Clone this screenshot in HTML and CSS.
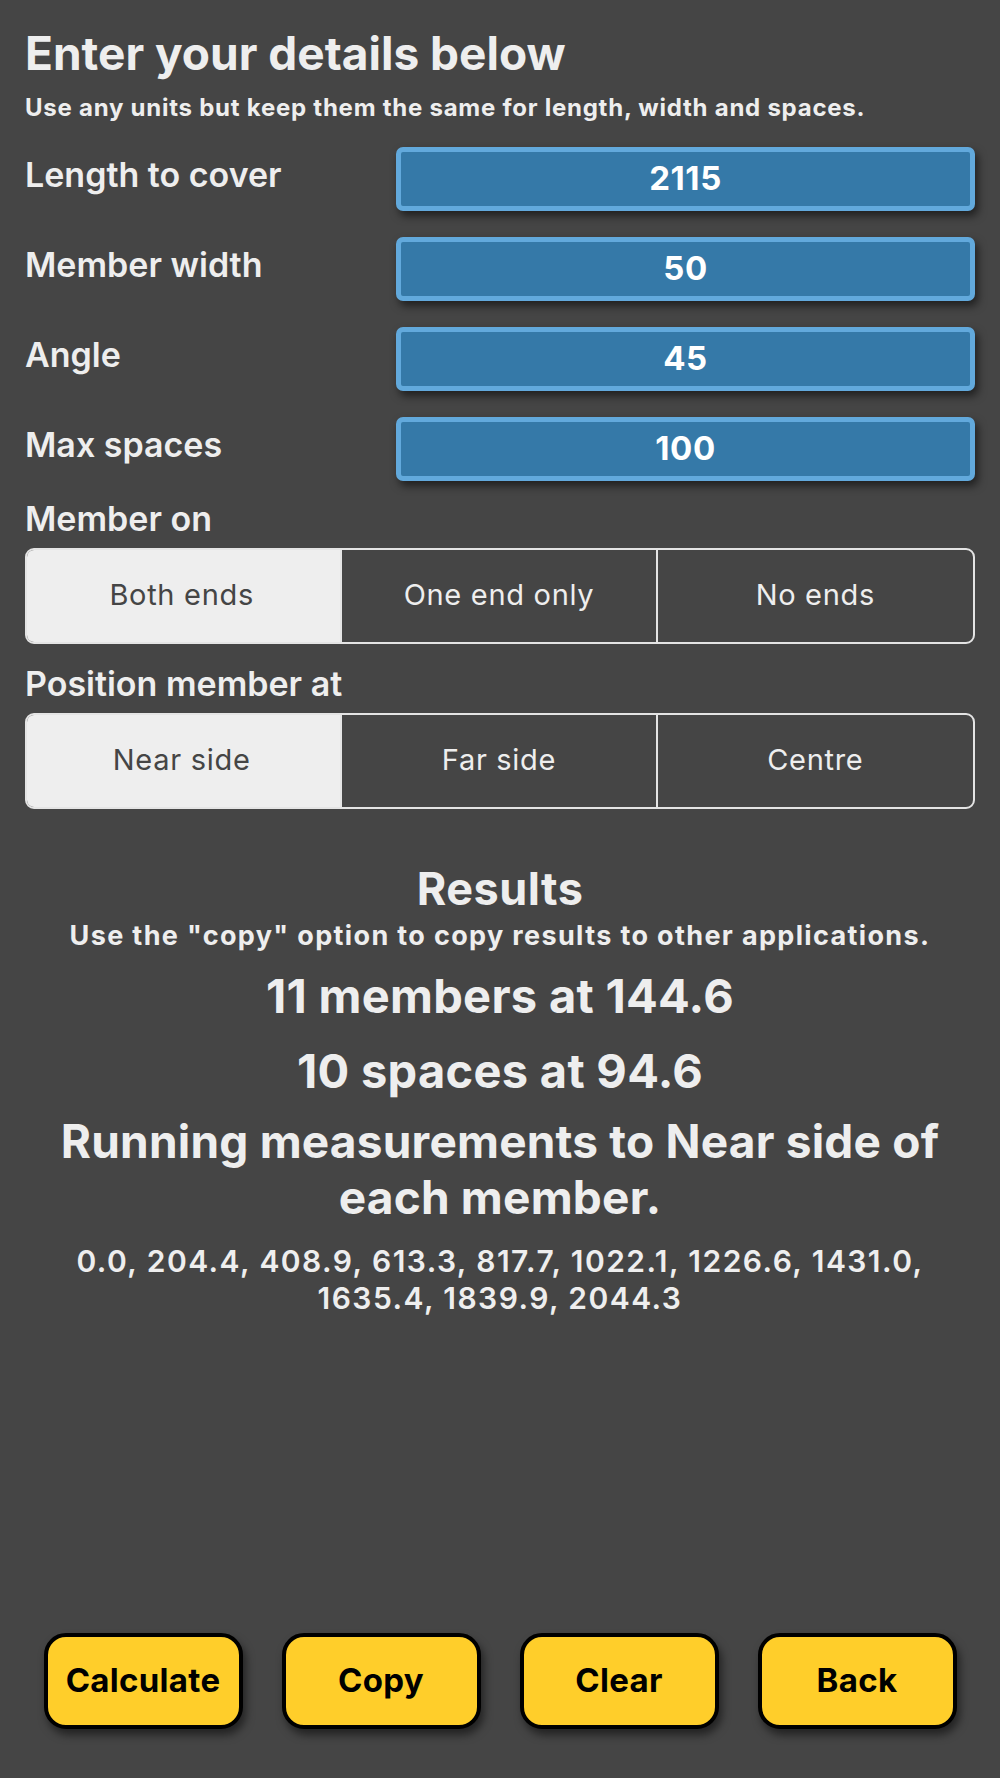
FILE: index.html
```html
<!DOCTYPE html>
<html lang="en">
<head>
<meta charset="utf-8">
<title>Spacing calculator</title>
<link rel="stylesheet" href="styles.css">
</head>
<body>
<div class="page">
  <h1 class="title">Enter your details below</h1>
  <p class="subtitle">Use any units but keep them the same for length, width and spaces.</p>

  <div class="field first">
    <span class="label">Length to cover</span>
    <div class="input">2115</div>
  </div>
  <div class="field">
    <span class="label">Member width</span>
    <div class="input">50</div>
  </div>
  <div class="field">
    <span class="label">Angle</span>
    <div class="input">45</div>
  </div>
  <div class="field">
    <span class="label">Max spaces</span>
    <div class="input">100</div>
  </div>

  <div class="group-label first">Member on</div>
  <div class="segmented">
    <div class="seg selected">Both ends</div>
    <div class="seg">One end only</div>
    <div class="seg">No ends</div>
  </div>

  <div class="group-label">Position member at</div>
  <div class="segmented">
    <div class="seg selected">Near side</div>
    <div class="seg">Far side</div>
    <div class="seg">Centre</div>
  </div>

  <section class="results">
    <h2 class="results-title">Results</h2>
    <p class="results-note">Use the "copy" option to copy results to other applications.</p>
    <p class="result-big">11 members at 144.6</p>
    <p class="result-big second">10 spaces at 94.6</p>
    <p class="result-running">Running measurements to Near side of each member.</p>
    <p class="result-list">0.0, 204.4, 408.9, 613.3, 817.7, 1022.1, 1226.6, 1431.0, 1635.4, 1839.9, 2044.3</p>
  </section>

  <div class="buttons">
    <div class="btn">Calculate</div>
    <div class="btn">Copy</div>
    <div class="btn">Clear</div>
    <div class="btn">Back</div>
  </div>
</div>
</body>
</html>
```

FILE: styles.css
```css
* { box-sizing: border-box; }

html, body {
  margin: 0;
  padding: 0;
  background: #454545;
}

body {
  font-family: Inter, "Noto Sans", "Liberation Sans", sans-serif;
  color: #eeeeee;
  line-height: 1.2;
}

.page {
  min-height: 100vh;
  display: flex;
  flex-direction: column;
  padding: 26px 25px 49px 25px;
}

.title {
  margin: 0;
  font-size: 46px;
  font-weight: 700;
  line-height: 1.2;
}

.subtitle {
  margin: 13px 0 0 0;
  font-size: 24px;
  font-weight: 700;
  letter-spacing: 0.75px;
  line-height: 1.2;
}

.field {
  display: flex;
  align-items: flex-start;
  height: 64px;
  margin-top: 26px;
}

.field.first { margin-top: 24px; }

.label {
  width: 371px;
  flex: none;
  padding-top: 8px;
  font-size: 34px;
  font-weight: 600;
  line-height: 1.2;
}

.input {
  flex: 1;
  height: 64px;
  background: #3579a8;
  border: 5px solid #62a9dc;
  border-radius: 7px;
  box-shadow: 3px 5px 8px rgba(0, 0, 0, 0.55);
  display: flex;
  align-items: center;
  justify-content: center;
  color: #ffffff;
  font-size: 33px;
  font-weight: 700;
  letter-spacing: 0.6px;
}

.group-label {
  margin-top: 20px;
  font-size: 34px;
  font-weight: 600;
  line-height: 1.2;
}

.group-label.first { margin-top: 18px; }

.segmented {
  margin-top: 8px;
  height: 96px;
  display: grid;
  grid-template-columns: 1fr 1fr 1fr;
  border: 2px solid #e4e4e4;
  border-radius: 9px;
  overflow: hidden;
}

.seg {
  display: flex;
  align-items: center;
  justify-content: center;
  font-size: 29px;
  font-weight: 400;
  letter-spacing: 0.7px;
  color: #eeeeee;
  border-right: 2px solid #e4e4e4;
}

.seg:last-child { border-right: none; }

.seg.selected {
  background: #eeeeee;
  color: #454545;
  padding-right: 4px;
}

.results {
  margin-top: 53px;
  text-align: center;
}

.results-title {
  margin: 0;
  font-size: 45px;
  font-weight: 700;
  letter-spacing: 0.5px;
  line-height: 1.2;
}

.results-note {
  margin: 4px 0 0 0;
  font-size: 27px;
  font-weight: 700;
  letter-spacing: 1.35px;
}

.result-big {
  margin: 16px 0 0 0;
  font-size: 47px;
  font-weight: 700;
  letter-spacing: 0.3px;
}

.result-big.second { margin-top: 19px; }

.result-running {
  margin: 13px auto 0 auto;
  max-width: 950px;
  font-size: 46px;
  font-weight: 700;
  letter-spacing: 0.2px;
  line-height: 56px;
}

.result-list {
  margin: 18px auto 0 auto;
  max-width: 900px;
  font-size: 30px;
  font-weight: 600;
  letter-spacing: 1.45px;
  line-height: 37px;
}

.buttons {
  margin-top: auto;
  display: flex;
  justify-content: center;
  gap: 39px;
}

.btn {
  width: 199px;
  height: 96px;
  background: #ffce2a;
  border: 4px solid #000000;
  border-radius: 22px;
  box-shadow: 3px 6px 8px rgba(0, 0, 0, 0.5);
  display: flex;
  align-items: center;
  justify-content: center;
  color: #000000;
  font-size: 33px;
  font-weight: 700;
  letter-spacing: 0.3px;
}
```
